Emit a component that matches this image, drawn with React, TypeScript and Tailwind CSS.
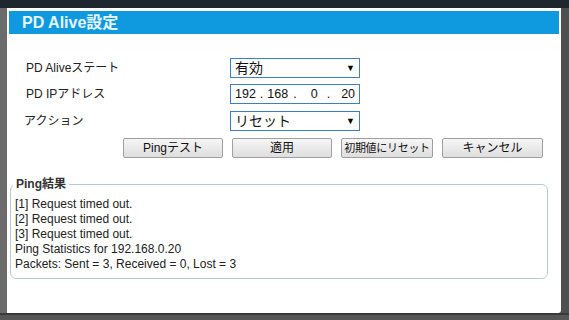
const font = { fontFamily: '"Liberation Sans", Arial, "Noto Sans CJK JP", sans-serif' };

const Select = ({ value }: { value: string }) => (
  <div className="flex h-[20px] w-[130px] items-center justify-between border border-[#3d7fbf] bg-white pr-[4px] pl-[4px]">
    <span className="text-[14px] leading-none text-[#111]">{value}</span>
    <span className="text-[9px] leading-none text-black">▼</span>
  </div>
);

const Button = ({ label, className }: { label: string; className: string }) => (
  <button
    className={`h-[20px] shrink-0 whitespace-nowrap rounded-[2px] border border-[#a0a0a0] bg-gradient-to-b from-[#f6f6f6] to-[#dedede] leading-none text-[#111] ${className}`}
  >
    {label}
  </button>
);

const App = () => {
  const results = [
    '[1] Request timed out.',
    '[2] Request timed out.',
    '[3] Request timed out.',
    'Ping Statistics for 192.168.0.20',
    'Packets: Sent = 3, Received = 0, Lost = 3',
  ];

  return (
    <div className="flex h-[320px] w-[569px] flex-col overflow-hidden bg-[#575757]" style={font}>
      <div className="h-[8px] shrink-0 bg-[#1d272d]" />
      <div className="flex">
        <div className="w-[7px] shrink-0 bg-[#6b6b6b]" />
        <div className="flex h-[305px] w-[554px] flex-col rounded-br-[3px] bg-white px-[2px] pt-[3px]">
          <div className="flex h-[23px] items-center bg-[#0f9ae0] pl-[13px]">
            <span className="text-[16px] font-bold text-[#e6f4fc]">PD Alive設定</span>
          </div>

          <div className="flex flex-col gap-[6px] pt-[24px] pl-[17px]">
            <div className="flex items-center">
              <span className="w-[204px] text-[12px] text-[#222]">PD Aliveステート</span>
              <Select value="有効" />
            </div>
            <div className="flex items-center">
              <span className="w-[204px] text-[12px] text-[#222]">PD IPアドレス</span>
              <div className="flex h-[20px] w-[130px] items-center whitespace-pre border border-[#3d7fbf] bg-white pl-[4px] text-[12.5px] leading-none text-[#111]">
                <span>192</span>
                <span className="ml-[4px]">.</span>
                <span className="ml-[4px]">168</span>
                <span className="ml-[5px]">.</span>
                <span className="ml-[14px]">0</span>
                <span className="ml-[9px]">.</span>
                <span className="ml-[11px]">20</span>
              </div>
            </div>
            <div className="flex items-center pt-[1px]">
              <span className="-ml-[2px] w-[206px] text-[12px] text-[#222]">アクション</span>
              <Select value="リセット" />
            </div>
          </div>

          <div className="flex gap-[9px] pt-[7px] pl-[114px]">
            <Button label="Pingテスト" className="w-[100px] text-[12px]" />
            <Button label="適用" className="w-[100px] text-[12px]" />
            <Button label="初期値にリセット" className="w-[92px] text-[11px] tracking-[-0.3px]" />
            <Button label="キャンセル" className="w-[101px] text-[12px]" />
          </div>

          <fieldset className="mt-[17px] ml-[1px] w-[538px] rounded-[6px] border border-[#b7ccd2] px-[4px] pt-[4px] pb-[6px]">
            <legend className="-ml-[2px] px-[3px] text-[12px] font-bold text-[#333]">Ping結果</legend>
            <div className="flex flex-col text-[12px] leading-[15px] text-[#222]">
              {results.map((line, index) => (
                <span key={index}>{line}</span>
              ))}
            </div>
          </fieldset>
        </div>
        <div className="w-[8px] shrink-0 bg-[#4f4f4f]" />
      </div>
      <div className="h-[2px] bg-[#3a3a3a]" />
    </div>
  );
};

export default App;
